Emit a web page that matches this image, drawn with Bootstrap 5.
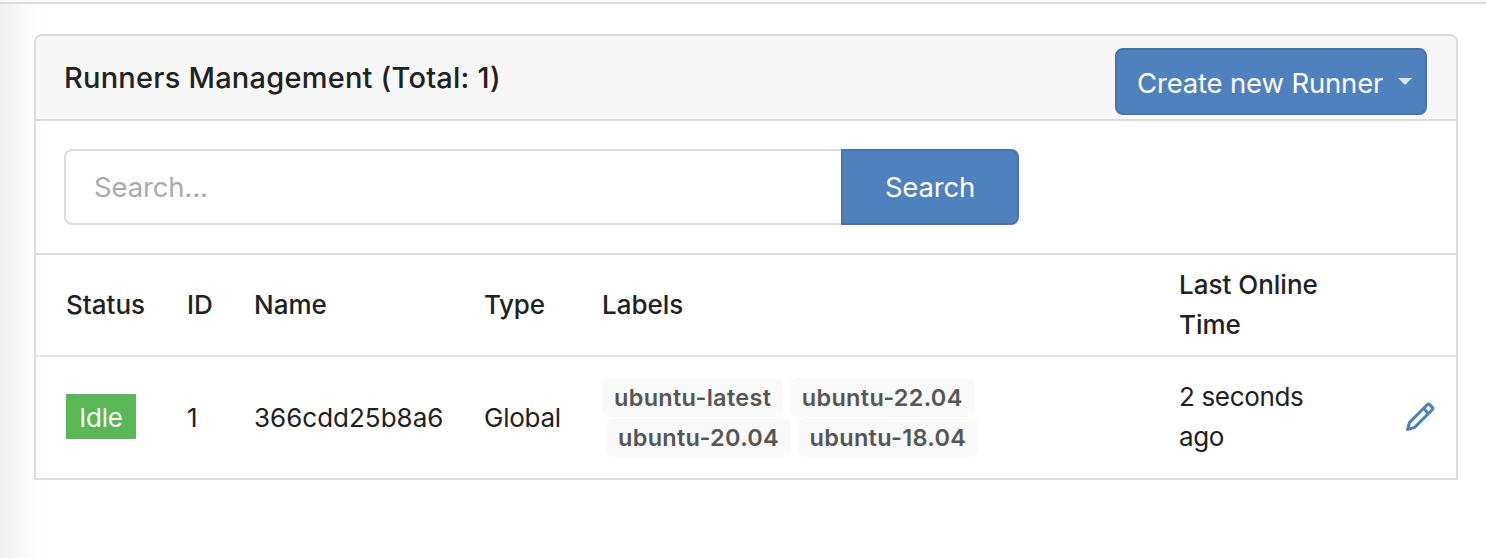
<!DOCTYPE html>
<html lang="en">
<head>
<meta charset="utf-8">
<meta name="viewport" content="width=device-width, initial-scale=1">
<title>Runners Management</title>
<link href="https://cdn.jsdelivr.net/npm/bootstrap@5.3.0/dist/css/bootstrap.min.css" rel="stylesheet">
<style>
  body { font-family: Inter, "Liberation Sans", sans-serif; font-size: 26px; line-height: 40px; color: #212121; min-height: 558px; overflow: hidden;
    background: linear-gradient(90deg, #f1f1f1 0, #f6f6f6 14px, #fbfbfb 27px, #fefefe 42px, #fff 52px); }
  .topline { height: 4px; background: #fafafa; border-bottom: 2px solid #dcdcdd; }
  .panel { margin: 30px 28px 0 34px; border: 2px solid #dcdcdd; border-radius: 8px 8px 0 0; }
  .panel-head { height: 85px; background: #f7f7f7; border-bottom: 2px solid #dcdcdd; border-radius: 6px 6px 0 0; padding: 0 29px 0 28px; }
  .panel-title { font-size: 29px; font-weight: 500; line-height: 40px; letter-spacing: .22px; }
  .btn-blue { --bs-btn-color: #fff; --bs-btn-bg: #5081bf; --bs-btn-border-color: #4873ab; --bs-btn-hover-color: #fff; --bs-btn-hover-bg: #4873ab; --bs-btn-border-width: 2px; --bs-btn-border-radius: 8px; --bs-btn-font-size: 27.5px; --bs-btn-line-height: 40px; letter-spacing: -.17px; }
  .btn-create { width: 312px; height: 67px; padding: 3px 0 0 20px; margin-top: 7px; }
  .btn-create::after { border-top: 7px solid #dce6f2; border-right: 7px solid transparent; border-left: 7px solid transparent; margin: -3px 0 0 15px; }
  .search-row { height: 134px; border-bottom: 2px solid #dcdcdd; padding: 28px; }
  .search-row .input-group { width: 955px; height: 76px; }
  .search-row .form-control { border: 2px solid #dcdcdd; border-right: 0; border-radius: 8px; padding: 2px 28px 0; font-size: 27.5px; letter-spacing: -.15px; background: transparent; }
  .search-row .form-control::placeholder { color: #ababab; opacity: 1; }
  .search-row .btn { width: 178px; }
  .runners { table-layout: fixed; border-collapse: separate; border-spacing: 0; --bs-table-bg: transparent; --bs-table-color: #212121; color: #212121; }
  .runners > thead th { height: 102px; padding: 10px 0; font-weight: 500; vertical-align: middle; border-bottom: 2px solid #e7e7e8; }
  .runners > tbody td { height: 121px; padding: 20px 0; border: 0; }
  .runners > tbody td.seen, .runners > tbody td.edit { padding: 19px 0 21px; }
  .runners th:first-child, .runners td:first-child { padding-left: 30px !important; }
  .status-tag { width: 70px; height: 45px; background: #5ab756; color: #fff; margin-top: -2px; padding-top: 3px; letter-spacing: -.2px; }
  .tag { height: 39px; border-radius: 8px; background: #f9f9f9; color: #565656; font-size: 23.5px; font-weight: 600; line-height: 39px; padding: 0 12px; letter-spacing: .3px; }
  .tag-gap { gap: 6.5px; }
  .tags { gap: 1px; }
  .seen { letter-spacing: -.35px; }
  .kind { letter-spacing: -.25px; }
  .pencil { color: #5081bf; display: block; margin-left: 14px; }
</style>
</head>
<body>
<div class="topline"></div>
<main class="panel">
  <div class="panel-head d-flex justify-content-between align-items-center">
    <h4 class="panel-title mb-0">Runners Management (Total: 1)</h4>
    <button class="btn btn-blue btn-create dropdown-toggle d-flex align-items-center" type="button">Create new Runner</button>
  </div>
  <form class="search-row">
    <div class="input-group flex-nowrap">
      <input class="form-control shadow-none" type="text" placeholder="Search..." aria-label="Search">
      <button class="btn btn-blue" type="button">Search</button>
    </div>
  </form>
  <table class="table runners align-middle mb-0">
    <colgroup><col style="width:151px"><col style="width:67px"><col style="width:230px"><col style="width:118px"><col style="width:577px"><col style="width:211px"><col></colgroup>
    <thead>
      <tr><th>Status</th><th>ID</th><th>Name</th><th class="kind">Type</th><th>Labels</th><th>Last Online<br>Time</th><th></th></tr>
    </thead>
    <tbody>
      <tr>
        <td><div class="status-tag d-flex align-items-center justify-content-center">Idle</div></td>
        <td>1</td>
        <td>366cdd25b8a6</td>
        <td class="kind">Global</td>
        <td>
          <div class="tags d-flex flex-column">
            <div class="tag-gap d-flex"><span class="tag">ubuntu-latest</span><span class="tag">ubuntu-22.04</span></div>
            <div class="tag-gap d-flex ms-1"><span class="tag">ubuntu-20.04</span><span class="tag">ubuntu-18.04</span></div>
          </div>
        </td>
        <td class="seen">2 seconds<br>ago</td>
        <td class="edit"><svg class="pencil" width="32" height="32" viewBox="0 0 16 16" fill="currentColor" aria-hidden="true"><path d="M11.013 1.427a1.75 1.75 0 0 1 2.474 0l1.086 1.086a1.75 1.75 0 0 1 0 2.474l-8.61 8.61c-.21.21-.47.364-.756.445l-3.251.93a.75.75 0 0 1-.927-.928l.929-3.25c.081-.286.235-.547.445-.758l8.61-8.61Zm.176 4.823L9.75 4.81l-6.286 6.287a.253.253 0 0 0-.064.108l-.558 1.953 1.953-.558a.253.253 0 0 0 .108-.064Zm1.238-3.763a.25.25 0 0 0-.354 0L10.811 3.75l1.439 1.44 1.263-1.263a.25.25 0 0 0 0-.354Z"/></svg></td>
      </tr>
    </tbody>
  </table>
</main>
<script src="https://cdn.jsdelivr.net/npm/bootstrap@5.3.0/dist/js/bootstrap.bundle.min.js"></script>
</body>
</html>
